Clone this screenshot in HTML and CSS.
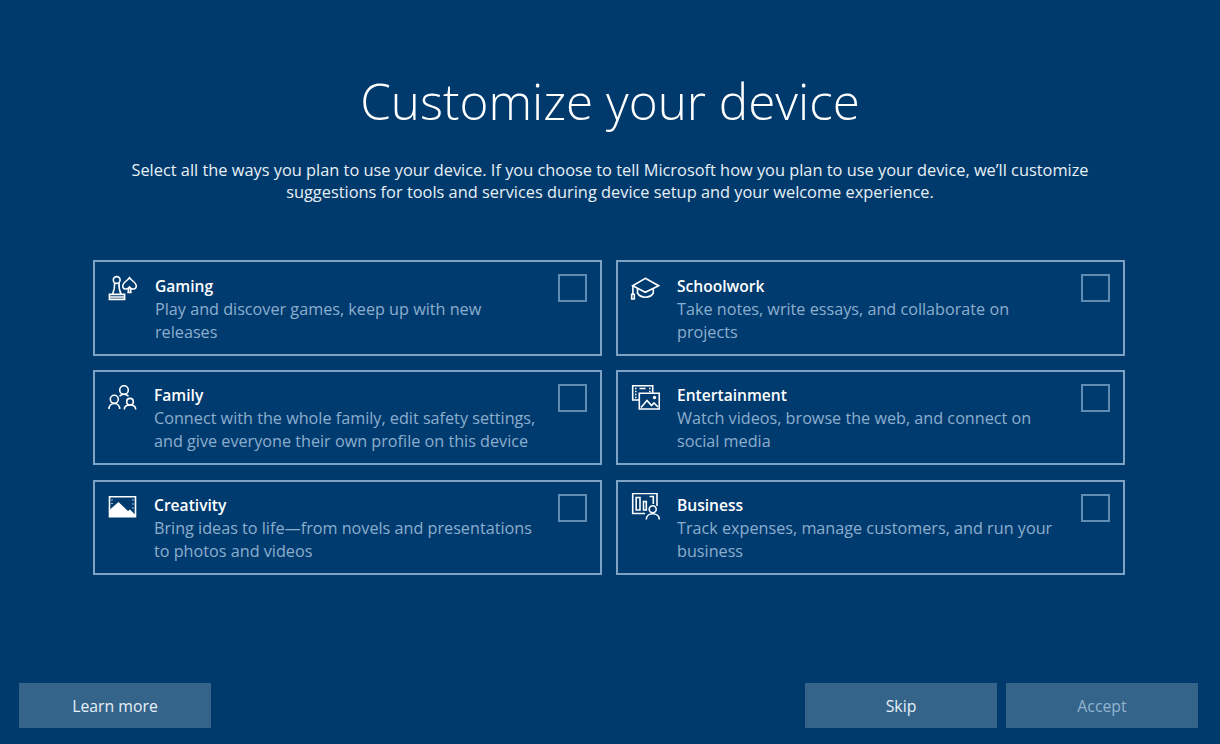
FILE: index.html
```html
<!DOCTYPE html>
<html lang="en">
<head>
<meta charset="utf-8">
<title>Customize your device</title>
<link rel="stylesheet" href="styles.css">
</head>
<body>
<main class="page">
  <h1 class="title">Customize your device</h1>
  <p class="intro">Select all the ways you plan to use your device. If you choose to tell Microsoft how you plan to use your device, we’ll customize<br>suggestions for tools and services during device setup and your welcome experience.</p>
  <section class="grid">
    <div class="card">
      <svg class="icon" viewBox="0 0 30 30"><circle cx="9.7" cy="7" r="3.4"/><path d="M7.600 10c.2 3.500-.3 7.500-2.200 11.300M12 10c-.2 3.500.2 7.500 2.200 11.300M2.400 21.400H17.600V26.400H2.400ZM2.400 24H17.600"/><path d="M22.500 4.800c-1.800 2.800-6.800 4.700-6.800 8.200 0 3.200 3.800 4 6 1.800l-.6 4.600h2.800l-.6-4.600c2.200 2.200 6 1.400 6-1.800 0-3.500-5-5.400-6.800-8.200Z"/></svg>
      <div class="copy wide top"><h2>Gaming</h2><p>Play and discover games, keep up with new releases</p></div>
      <span class="box"></span>
    </div>
    <div class="card">
      <svg class="icon" viewBox="0 0 30 30"><path d="M15.300 5.300 28.700 12.700 15.300 19.300 2.700 12.700Z"/><path d="M7.500 15v5c1.500 2.600 4.500 4.200 8 4.200s6.300-1.600 7.800-4.200v-5M2.900 13v8"/><path d="M1.700 21.300h2.600v4.700H1.700Z"/></svg>
      <div class="copy top"><h2>Schoolwork</h2><p>Take notes, write essays, and collaborate on projects</p></div>
      <span class="box"></span>
    </div>
    <div class="card">
      <svg class="icon" viewBox="0 0 30 30"><circle cx="17" cy="7" r="4.300"/><circle cx="7.300" cy="16.300" r="4"/><circle cx="23" cy="18.700" r="3.300"/><path d="M2 26c0-3.400 2.300-5.500 5.300-5.500s5.400 2.100 5.400 5.500M12.500 13.200c1.200-1.300 2.800-2 4.500-2 1.700 0 3.300.7 4.500 2M17.300 26.400c0-2.900 2.400-4.400 5.700-4.400s5.700 1.500 5.700 4.400"/></svg>
      <div class="copy"><h2>Family</h2><p>Connect with the whole family, edit safety settings, and give everyone their own profile on this device</p></div>
      <span class="box"></span>
    </div>
    <div class="card">
      <svg class="icon" viewBox="0 0 30 30"><path d="M9 17H2.700V2.700H22.700V10"/><path d="M9.300 10.300H29.300V26H9.300Z"/><path class="dots" d="M5 5.500h1.500M5 8.500h1.500M5 11.500h1.500M5 14.500h1.500M19 5.500h1.500M19 8.500h1.500M9.500 5.500h6"/><path d="M11 24.500 17 17.500 21.500 22.500 24 20 28 24"/><circle cx="24.500" cy="14.500" r=".9"/></svg>
      <div class="copy"><h2>Entertainment</h2><p>Watch videos, browse the web, and connect on social media</p></div>
      <span class="box"></span>
    </div>
    <div class="card">
      <svg class="icon" viewBox="0 0 30 30"><path d="M2.500 3.700H28.500V23.700H2.500Z"/><path class="solid" d="M3 16.500 11.500 9 21 18 23 16.500 28 21.500V23.300H3Z"/><path class="dots" d="M5 6.500v1M5 10v1M26 6.500v1M26 10.500v1M26 14.500v1"/></svg>
      <div class="copy"><h2>Creativity</h2><p>Bring ideas to life—from novels and presentations to photos and videos</p></div>
      <span class="box"></span>
    </div>
    <div class="card">
      <svg class="icon" viewBox="0 0 30 30"><path d="M15 20.500H2.700V.5H27V13"/><path d="M6.200 4.500H10V17H6.200ZM13.500 8.500h2.800V17h-2.800v-8.500ZM19.500 3.500h3.800V11"/><circle cx="22.700" cy="16.300" r="3.500"/><path d="M16.300 26.400c0-3.400 2.700-5.700 6.400-5.700s6.600 2.300 6.600 5.700"/></svg>
      <div class="copy"><h2>Business</h2><p>Track expenses, manage customers, and run your business</p></div>
      <span class="box"></span>
    </div>
  </section>
  <footer class="actions">
    <button class="btn" type="button">Learn more</button>
    <span class="spacer"></span>
    <button class="btn" type="button">Skip</button>
    <button class="btn disabled" type="button">Accept</button>
  </footer>
</main>
</body>
</html>
```
FILE: styles.css
```css
* { box-sizing: border-box; }
html, body { margin: 0; padding: 0; }
body {
  background: #003a6c;
  color: #fff;
  font-family: "Open Sans", "Noto Sans", "Liberation Sans", sans-serif;
}
.page {
  width: 1220px;
  height: 744px;
  display: flex;
  flex-direction: column;
  overflow: hidden;
}
.title {
  margin: 64px 0 0;
  height: 74px;
  font-size: 49.400px;
  line-height: 73px;
  font-weight: 300;
  text-align: center;
}
.intro {
  margin: 21px 0 0;
  font-size: 16.360px;
  line-height: 22px;
  text-align: center;
  color: #e8f0f7;
}
.grid {
  display: grid;
  grid-template-columns: 509px 509px;
  grid-auto-rows: 95.600px;
  gap: 14.200px 14px;
  margin: 57px 0 0 93px;
}
.card {
  display: flex;
  align-items: flex-start;
  border: 2px solid #7ea3c4;
  padding: 11px 13px 0 12px;
  background: #003b70;
}
.icon {
  flex: none;
  width: 30px;
  height: 30px;
  fill: none;
  stroke: #fff;
  stroke-width: 1.600;
}
.icon .solid { fill: #fff; stroke: none; }
.icon .dots { stroke-width: 1.300; }
.copy {
  flex: none;
  width: 388px;
  margin: 1px 0 0 17px;
}
.copy.wide { margin-left: 18px; }
.copy.top { margin-top: 2px; }
.copy h2 {
  margin: 0;
  font-size: 15.600px;
  line-height: 23px;
  font-weight: 600;
  color: #fff;
}
.copy p {
  margin: 0;
  font-size: 16.200px;
  line-height: 23px;
  color: #8caecd;
}
.box {
  flex: none;
  width: 29px;
  height: 28px;
  margin: 1px 0 0 auto;
  border: 2px solid #5f8cb2;
}
.actions {
  margin-top: auto;
  display: flex;
  gap: 9px;
  padding: 0 22px 16px 19px;
}
.spacer { flex: 1; }
.btn {
  width: 192px;
  height: 45px;
  border: 0;
  padding: 1px 0 0;
  background: #35648a;
  color: #e6f0f8;
  font: 400 15.800px/23px "Open Sans", "Noto Sans", sans-serif;
}
.btn.disabled { color: #92b3cf; }
```
